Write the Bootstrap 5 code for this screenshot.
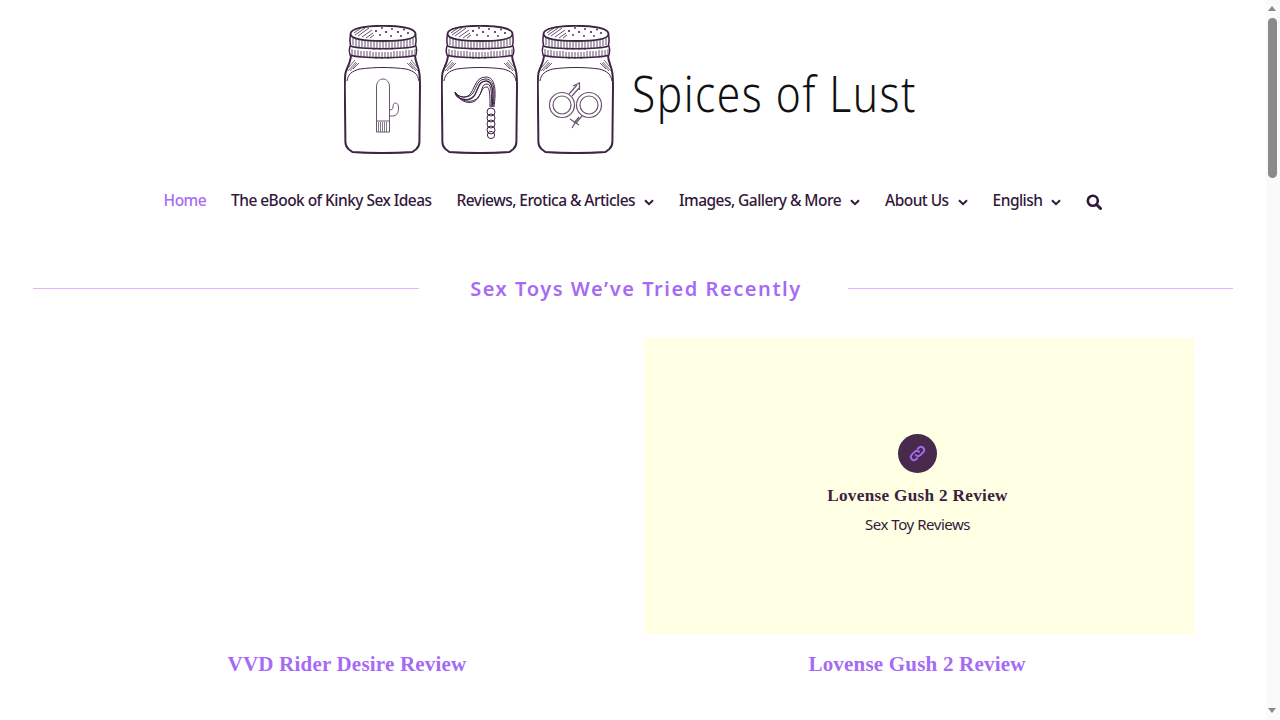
<!DOCTYPE html>
<html lang="en">
<head>
  <meta charset="UTF-8" />
  <meta name="viewport" content="width=device-width, initial-scale=1" />
  <title>Spices of Lust</title>
  <link href="https://cdn.jsdelivr.net/npm/bootstrap@5.3.0/dist/css/bootstrap.min.css" rel="stylesheet" />
  <style>
    body { font-family: "Noto Sans", "Open Sans", sans-serif; color: #3b2140; background: #fff; overflow: hidden; height: 720px; }
    .page-wrap { width: 1266px; height: 720px; }
    .logo-row { padding-top: 25px; height: 177px; padding-left: 344px; }
    .logo-name { font-family: "Noto Sans", sans-serif; font-weight: 300; font-size: 50px; line-height: 1; letter-spacing: 1.750px; color: #111; margin-left: 17px; margin-top: 43px; transform: scaleX(.85); transform-origin: left center; white-space: nowrap; }
    .main-nav { height: 46px; gap: 25px; padding-top: 2px; }
    .main-nav a { color: #32183b; font-size: 15.500px; font-weight: 500; letter-spacing: -.54px; text-decoration: none; white-space: nowrap; }
    .main-nav a.on { color: #a66bf5; }
    .main-nav svg { margin-left: 9px; }
    .sec-title { width: 1200px; margin: 47px 0 0 33px; height: 36px; }
    .sec-title i { height: 1px; flex: 1; background: #e0b3ff; }
    .sec-title h2 { width: 429px; margin: 2px 0 0; padding-left: 6px; text-align: center; font-family: "Noto Sans", sans-serif; font-size: 20px; font-weight: 600; letter-spacing: 1.55px; color: #a66bf5; }
    .post-grid { width: 1140px; margin: 32px 0 0 62px; }
    .post-pic { height: 296px; width: 550px; margin-left: 12px; background: #ffffe4; padding: 96px 3px 0 0; }
    .pic-dot { width: 39px; height: 39px; border-radius: 50%; background: #472a4c; }
    .pic-title { font-family: "Liberation Serif", serif; font-weight: 700; font-size: 17.200px; line-height: 1; color: #3b2140; margin-top: 14px; letter-spacing: .3px; }
    .pic-cat { font-size: 15px; font-weight: 400; letter-spacing: -.45px; margin-top: 9px; color: #32183b; }
    .post-name { font-family: "Liberation Serif", serif; font-weight: 700; font-size: 21px; line-height: 1; color: #a66bf5; text-align: center; margin: 20px 0 0; letter-spacing: .2px; }
    .fake-bar { position: fixed; top: 0; right: 0; width: 14px; height: 720px; background: #fafafa; }
    .fake-thumb { position: absolute; left: 2px; top: 18px; width: 9px; height: 160px; border-radius: 5px; background: #8a8a8a; }
    .fake-arrow { position: absolute; left: 2px; width: 0; height: 0; border-left: 4.500px solid transparent; border-right: 4.500px solid transparent; }
    .fake-arrow.up { top: 6px; border-bottom: 5px solid #8a8a8a; }
    .fake-arrow.down { top: 708px; border-top: 5px solid #8a8a8a; }
  </style>
</head>
<body class="m-0">
  <svg width="0" height="0" class="position-absolute">
    <symbol id="jar" viewBox="0 0 78 129">
      <g fill="none" stroke="#3f2545" stroke-linejoin="round">
        <path stroke-width="1.800" d="M6.500 9C6.500 3.500 20 .8 39 .8S71.500 3.500 71.500 9c0 5-14 7-32.500 7S6.500 14 6.500 9Z"/>
        <path stroke-width="1.500" d="M6.500 9c-.8 4-.8 8 0 12 9 3.500 56 3.500 65 0 .8-4 .8-8 0-12"/>
        <path stroke-width="1.500" d="M6 21c-1 3-1 6 0 9 10 3.500 56 3.500 66 0 1-3 1-6 0-9"/>
        <path stroke-width="2" d="M7 30c0 7-4 12-5.500 18C.8 52 .8 58 .8 62l.6 55c0 4 1 5 3 7l4 3c20 1.400 40 1.400 60 0l4-3c2-2 3-3 3-7l.6-55c0-4 0-10-.7-14C75 42 71 37 71 30"/>
        <path stroke-width="1" d="M3 56c1-7 5-10 13-12 15-2 31-2 46 0 8 2 12 5 13 12"/>
        <path stroke-width=".8" d="M9 13v7M12 14v8M15 14v9M18 15v8M21 15v9M24 15v9M27 16v8M30 16v9M33 16v8M36 16v9M39 16v8M42 16v9M45 16v8M48 16v9M51 16v8M54 15v9M57 15v8M60 15v8M63 14v8M66 14v7M69 13v7"/>
        <path stroke-width=".8" d="M8 24v6M11 25v6M14 25v7M17 26v6M20 26v7M23 26v7M26 26v7M29 27v6M32 27v7M35 27v6M38 27v7M41 27v6M44 27v7M47 27v6M50 26v7M53 26v7M56 26v6M59 26v6M62 25v7M65 25v6M68 25v6M71 24v5"/>
        <path stroke-width=".8" d="M10 8l7-5M11 10l10-7M14 11l11-8M18 12l10-7M22 13l7-5M26 13l4-3"/>
        <path stroke-width=".7" d="M5 42l6-7M4 46l8-9M6 46l7-8M9 44l6-6M73 42l-6-7M74 46l-8-9M72 46l-7-8M69 44l-6-6"/>
      </g>
      <g fill="#3f2545">
        <circle cx="32" cy="6" r="1.100"/><circle cx="38" cy="3" r=".9"/><circle cx="42" cy="7" r="1.100"/><circle cx="48" cy="4" r=".9"/><circle cx="54" cy="7" r="1.100"/><circle cx="60" cy="4.500" r=".9"/><circle cx="64" cy="8" r="1"/><circle cx="36" cy="10" r=".9"/><circle cx="47" cy="11" r=".9"/><circle cx="57" cy="11" r=".9"/>
      </g>
    </symbol>
  </svg>

  <div class="page-wrap">
    <div class="logo-row d-flex">
      <svg width="271" height="129" viewBox="0 0 271 129">
        <use href="#jar" x="0" width="78" height="129"/>
        <g fill="none" stroke="#6a5570" stroke-width="1">
          <path d="M32.500 107V62c0-5 3-8 6.500-8s6.500 3 6.500 8v45Z"/>
          <path d="M32.500 96h13M45.500 91h3c4 0 6-3 6-8 0-3-1-5-3-5s-2.500 2-2.500 4c0 2-1 3-3.500 3"/>
          <path stroke-width=".8" d="M34.500 97v10M36.500 97v10M38.500 97v10M40.500 97v10M42.500 97v10"/>
        </g>
        <use href="#jar" x="97" width="78" height="129"/>
        <g fill="none" stroke="#3f2545" stroke-width="1" transform="translate(97 0)">
          <path stroke-width="1.400" d="M14 67c1 7 13 11 19 4 5-7 4-15 12-15 7 0 8 12 6 26"/>
          <path d="M14 67c3 6 14 7 18 1 4-6 4-14 13-14 9 0 9 14 7 28"/>
          <path d="M15 68c4 6 12 5 15 0 4-6 5-16 15-16 10 0 10 15 8 30"/>
          <path d="M15 68c2 8 16 14 22 5 5-7 3-14 9-14 5 0 5 12 4 23"/>
          <path d="M16 70c4 6 16 10 22 1 4-6 3-9 8-9 3 0 3 10 3 20"/>
          <circle cx="50" cy="87" r="4"/><circle cx="50" cy="93" r="4"/><circle cx="50" cy="99" r="4"/><circle cx="50" cy="105" r="4"/><circle cx="50" cy="110" r="3.600"/>
        </g>
        <use href="#jar" x="193" width="78" height="129"/>
        <g fill="none" stroke="#6a5570" stroke-width="1.200" transform="translate(193 0)">
          <circle cx="25" cy="80" r="12.500"/><circle cx="25" cy="80" r="9"/>
          <circle cx="52" cy="80" r="12.500"/><circle cx="52" cy="80" r="9"/>
          <path d="M32 69l8-9M35 71l7-8M36 61l6.500-3v7"/>
          <path d="M45 91l-6 7M42 92l-5 6M33 94l9 6M35 103l3-5"/>
        </g>
      </svg>
      <div class="logo-name">Spices of Lust</div>
    </div>

    <nav class="main-nav d-flex align-items-center justify-content-center">
      <a class="on" href="#">Home</a>
      <a href="#">The eBook of Kinky Sex Ideas</a>
      <a href="#">Reviews, Erotica &amp; Articles<svg width="10" height="7" viewBox="0 0 10 7"><path d="M1 1.200l4 4 4-4" fill="none" stroke="#32183b" stroke-width="2"/></svg></a>
      <a href="#">Images, Gallery &amp; More<svg width="10" height="7" viewBox="0 0 10 7"><path d="M1 1.200l4 4 4-4" fill="none" stroke="#32183b" stroke-width="2"/></svg></a>
      <a href="#">About Us<svg width="10" height="7" viewBox="0 0 10 7"><path d="M1 1.200l4 4 4-4" fill="none" stroke="#32183b" stroke-width="2"/></svg></a>
      <a href="#">English<svg width="10" height="7" viewBox="0 0 10 7"><path d="M1 1.200l4 4 4-4" fill="none" stroke="#32183b" stroke-width="2"/></svg></a>
      <a href="#" aria-label="Search"><svg class="m-0" width="16" height="16" viewBox="0 0 16 16"><circle cx="6.800" cy="6.800" r="5" fill="none" stroke="#32183b" stroke-width="2.600"/><path d="M10.500 10.500l4 4" stroke="#32183b" stroke-width="3" stroke-linecap="round"/></svg></a>
    </nav>

    <div class="sec-title d-flex align-items-center">
      <i></i><h2>Sex Toys We’ve Tried Recently</h2><i></i>
    </div>

    <div class="post-grid row g-0">
      <div class="col-6">
        <div class="post-pic bg-white"></div>
        <h3 class="post-name">VVD Rider Desire Review</h3>
      </div>
      <div class="col-6">
        <div class="post-pic d-flex flex-column align-items-center">
          <div class="pic-dot d-flex align-items-center justify-content-center">
            <svg width="19" height="19" viewBox="0 0 18 18" fill="none" stroke="#a66bf5" stroke-width="1.800" stroke-linecap="round"><path d="M7.500 10.500a3 3 0 0 0 4.200 0l3-3a3 3 0 0 0-4.200-4.200L9.300 4.500"/><path d="M10.500 7.500a3 3 0 0 0-4.200 0l-3 3a3 3 0 0 0 4.200 4.200l1.200-1.200"/></svg>
          </div>
          <div class="pic-title">Lovense Gush 2 Review</div>
          <div class="pic-cat">Sex Toy Reviews</div>
        </div>
        <h3 class="post-name">Lovense Gush 2 Review</h3>
      </div>
    </div>
  </div>

  <div class="fake-bar"><span class="fake-arrow up"></span><span class="fake-thumb"></span><span class="fake-arrow down"></span></div>
  <script src="https://cdn.jsdelivr.net/npm/bootstrap@5.3.0/dist/js/bootstrap.bundle.min.js"></script>
</body>
</html>
